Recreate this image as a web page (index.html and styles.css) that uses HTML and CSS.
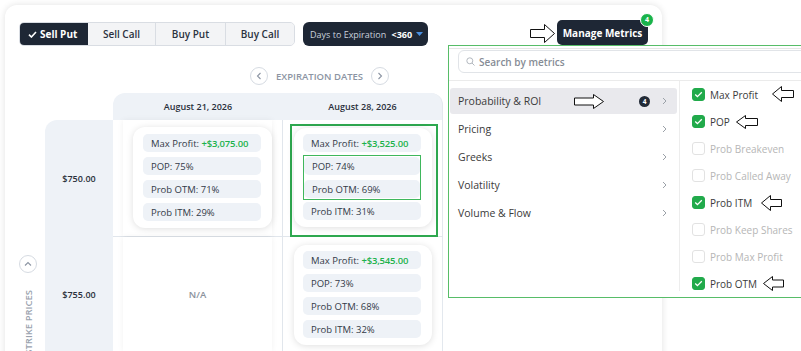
FILE: index.html
```html
<!DOCTYPE html>
<html>
<head>
<meta charset="utf-8">
<link rel="stylesheet" href="styles.css">
</head>
<body>
<div class="page">
  <section class="card">
    <header class="toolbar">
      <div class="seg">
        <button class="seg-btn active w68"><svg class="chk" width="9" height="7" viewBox="0 0 9 7"><path d="M1 3.6 L3.4 6 L8 1" fill="none" stroke="#fff" stroke-width="1.6"/></svg>Sell Put</button>
        <button class="seg-btn w68">Sell Call</button>
        <button class="seg-btn w70">Buy Put</button>
        <button class="seg-btn w68 last">Buy Call</button>
      </div>
      <button class="dte">Days to Expiration <b>&lt;360</b><svg class="caret" width="7" height="4" viewBox="0 0 7 4"><path d="M0 0 H7 L3.5 4 Z" fill="#4a90e2"/></svg></button>
      <div class="spacer"></div>
      <svg class="ann-right-big" width="25" height="19" viewBox="0 0 25 19"><polygon points="0.5,5.5 14.5,5.5 14.5,0.5 24.5,9.5 14.5,18.5 14.5,13.5 0.5,13.5" fill="#fff" stroke="#111" stroke-width="1"/></svg>
      <button class="manage">Manage Metrics<span class="badge">4</span></button>
    </header>

    <div class="exp-nav">
      <span class="circ"><svg width="6" height="8" viewBox="0 0 6 8"><path d="M4.5 1 L1.5 4 L4.5 7" fill="none" stroke="#8c95a3" stroke-width="1.1"/></svg></span>
      <span class="exp-label">EXPIRATION DATES</span>
      <span class="circ"><svg width="6" height="8" viewBox="0 0 6 8"><path d="M1.5 1 L4.5 4 L1.5 7" fill="none" stroke="#8c95a3" stroke-width="1.1"/></svg></span>
    </div>

    <div class="grid-area">
      <div class="axis">
        <span class="circ"><svg width="8" height="6" viewBox="0 0 8 6"><path d="M1 4.5 L4 1.5 L7 4.5" fill="none" stroke="#8c95a3" stroke-width="1.1"/></svg></span>
        <span class="axis-label">STRIKE PRICES</span>
      </div>
      <div class="table">
        <div class="corner"></div>
        <div class="th th-first">August 21, 2026</div>
        <div class="th th-last">August 28, 2026</div>

        <div class="strike strike-first">$750.00</div>
        <div class="cell c1 r1">
          <div class="wrap">
            <div class="mcard mcard-a">
              <div class="pill">Max Profit:&nbsp;<span class="pos">+$3,075.00</span></div>
              <div class="pill">POP: 75%</div>
              <div class="pill">Prob OTM: 71%</div>
              <div class="pill">Prob ITM: 29%</div>
            </div>
          </div>
        </div>
        <div class="cell c2 r1">
          <div class="hl">
            <div class="mcard mcard-b">
              <div class="pill">Max Profit:&nbsp;<span class="pos">+$3,525.00</span></div>
              <div class="hl-inner">
                <div class="pill">POP: 74%</div>
                <div class="pill">Prob OTM: 69%</div>
              </div>
              <div class="pill pill-after">Prob ITM: 31%</div>
            </div>
          </div>
        </div>

        <div class="strike">$755.00</div>
        <div class="cell c1">
          <div class="wrap na">N/A</div>
        </div>
        <div class="cell c2 r2">
          <div class="mcard mcard-b">
            <div class="pill">Max Profit:&nbsp;<span class="pos">+$3,545.00</span></div>
            <div class="pill">POP: 73%</div>
            <div class="pill">Prob OTM: 68%</div>
            <div class="pill">Prob ITM: 32%</div>
          </div>
        </div>
      </div>
    </div>
  </section>

  <div class="panel">
    <div class="panel-head">
      <div class="search">
        <svg width="9" height="9" viewBox="0 0 9 9"><circle cx="3.8" cy="3.8" r="3" fill="none" stroke="#b3b8bf" stroke-width="1"/><path d="M6 6 L8.5 8.5" stroke="#b3b8bf" stroke-width="1"/></svg>
        <span class="ph">Search by metrics</span>
      </div>
    </div>
    <div class="panel-body">
      <ul class="menu">
        <li class="mi sel">Probability &amp; ROI
          <svg class="ann-right" width="30" height="15" viewBox="0 0 30 15"><polygon points="0.5,4 19.5,4 19.5,0.5 29.5,7.5 19.5,14.5 19.5,11 0.5,11" fill="#fff" stroke="#111" stroke-width="1"/></svg>
          <span class="mbadge">4</span>
          <svg class="chev" width="5" height="8" viewBox="0 0 5 8"><path d="M1 1 L4 4 L1 7" fill="none" stroke="#9ba1a8" stroke-width="1"/></svg>
        </li>
        <li class="mi">Pricing<svg class="chev" width="5" height="8" viewBox="0 0 5 8"><path d="M1 1 L4 4 L1 7" fill="none" stroke="#9ba1a8" stroke-width="1"/></svg></li>
        <li class="mi">Greeks<svg class="chev" width="5" height="8" viewBox="0 0 5 8"><path d="M1 1 L4 4 L1 7" fill="none" stroke="#9ba1a8" stroke-width="1"/></svg></li>
        <li class="mi">Volatility<svg class="chev" width="5" height="8" viewBox="0 0 5 8"><path d="M1 1 L4 4 L1 7" fill="none" stroke="#9ba1a8" stroke-width="1"/></svg></li>
        <li class="mi">Volume &amp; Flow<svg class="chev" width="5" height="8" viewBox="0 0 5 8"><path d="M1 1 L4 4 L1 7" fill="none" stroke="#9ba1a8" stroke-width="1"/></svg></li>
      </ul>
      <ul class="opts">
        <li class="opt on"><span class="cb"><svg width="9" height="7" viewBox="0 0 9 7"><path d="M1.2 3.6 L3.4 5.6 L7.8 1.2" fill="none" stroke="#fff" stroke-width="1.3"/></svg></span>Max Profit<svg class="ann-left a1" width="22" height="16" viewBox="0 0 22 16"><polygon points="21.5,4.5 9.5,4.5 9.5,0.5 0.5,8 9.5,15.5 9.5,11.5 21.5,11.5" fill="#fff" stroke="#111" stroke-width="1"/></svg></li>
        <li class="opt on"><span class="cb"><svg width="9" height="7" viewBox="0 0 9 7"><path d="M1.2 3.6 L3.4 5.6 L7.8 1.2" fill="none" stroke="#fff" stroke-width="1.3"/></svg></span>POP<svg class="ann-left a2" width="22" height="14" viewBox="0 0 22 14"><polygon points="21.5,3.5 9.5,3.5 9.5,0.5 0.5,7 9.5,13.5 9.5,10.5 21.5,10.5" fill="#fff" stroke="#111" stroke-width="1"/></svg></li>
        <li class="opt"><span class="cb"></span>Prob Breakeven</li>
        <li class="opt"><span class="cb"></span>Prob Called Away</li>
        <li class="opt on"><span class="cb"><svg width="9" height="7" viewBox="0 0 9 7"><path d="M1.2 3.6 L3.4 5.6 L7.8 1.2" fill="none" stroke="#fff" stroke-width="1.3"/></svg></span>Prob ITM<svg class="ann-left a3" width="21" height="16" viewBox="0 0 21 16"><polygon points="20.5,4.5 9.5,4.5 9.5,0.5 0.5,8 9.5,15.5 9.5,11.5 20.5,11.5" fill="#fff" stroke="#111" stroke-width="1"/></svg></li>
        <li class="opt"><span class="cb"></span>Prob Keep Shares</li>
        <li class="opt"><span class="cb"></span>Prob Max Profit</li>
        <li class="opt on"><span class="cb"><svg width="9" height="7" viewBox="0 0 9 7"><path d="M1.2 3.6 L3.4 5.6 L7.8 1.2" fill="none" stroke="#fff" stroke-width="1.3"/></svg></span>Prob OTM<svg class="ann-left a4" width="21" height="15" viewBox="0 0 21 15"><polygon points="20.5,4 9.5,4 9.5,0.5 0.5,7.5 9.5,14.5 9.5,11 20.5,11" fill="#fff" stroke="#111" stroke-width="1"/></svg></li>
      </ul>
    </div>
  </div>
</div>
</body>
</html>
```

FILE: styles.css
```css
* { box-sizing: border-box; }
html, body {
  margin: 0;
  padding: 0;
  background: #fff;
  width: 801px;
  height: 351px;
  overflow: hidden;
  font-family: "Open Sans", "Liberation Sans", sans-serif;
  color: #2f3440;
}
ul { list-style: none; margin: 0; padding: 0; }
button { font-family: inherit; border: 0; margin: 0; padding: 0; cursor: pointer; }

.page {
  position: relative;
  width: 801px;
  height: 351px;
  padding: 5px 0 0 5px;
  overflow: hidden;
}

.card {
  width: 657px;
  height: 420px;
  background: #fff;
  border-radius: 12px;
  box-shadow: 0 0 7px rgba(0, 0, 0, 0.12);
  padding: 15px 14px 0 14px;
}

/* toolbar */
.toolbar { display: flex; align-items: flex-start; height: 26px; }
.seg {
  display: flex;
  margin-top: 2px;
  height: 24px;
  border: 1px solid #d9dde3;
  border-radius: 5px;
  overflow: hidden;
  background: #f3f4f6;
}
.seg-btn {
  height: 22px;
  background: #f3f4f6;
  color: #2b3240;
  font-size: 10px;
  font-weight: 600;
  border-right: 1px solid #d9dde3;
  display: flex;
  align-items: center;
  justify-content: center;
}
.seg-btn.last { border-right: 0; }
.w68 { width: 68px; }
.w70 { width: 70px; }
.seg-btn.active {
  background: #1e2735;
  color: #fff;
  font-weight: 700;
  border-right: 0;
  justify-content: flex-start;
  padding-left: 8px;
}
.chk { margin-right: 3px; }

.dte {
  margin: 2px 0 0 8px;
  height: 24px;
  width: 125px;
  background: #1e2735;
  border-radius: 6px;
  color: #c9d1dc;
  font-size: 9px;
  font-weight: 500;
  display: flex;
  align-items: center;
  padding-left: 7px;
  white-space: pre;
}
.dte b { color: #fff; font-weight: 700; margin-left: 3px; }
.caret { margin-left: 4px; }

.spacer { flex: 1; }
.ann-right-big { margin: 4px 2px 0 0; }
.manage {
  position: relative;
  width: 91px;
  height: 25px;
  background: #1e2735;
  border-radius: 5px;
  color: #fff;
  font-size: 10px;
  font-weight: 700;
}
.badge {
  position: absolute;
  top: -7px;
  right: -6px;
  width: 14px;
  height: 14px;
  border-radius: 50%;
  background: #19b34a;
  border: 1.5px solid #fff;
  color: #fff;
  font-size: 7px;
  font-weight: 700;
  line-height: 11px;
  text-align: center;
}

/* expiration nav */
.exp-nav {
  display: flex;
  align-items: center;
  margin: 21px 0 0 231px;
  height: 18px;
}
.circ {
  width: 18px;
  height: 18px;
  border: 1px solid #d6dbe2;
  border-radius: 50%;
  display: flex;
  align-items: center;
  justify-content: center;
  background: #fff;
}
.exp-label {
  margin: 0 8px;
  font-size: 9.5px;
  font-weight: 600;
  color: #8c95a3;
}

/* grid area */
.grid-area { display: flex; margin-top: 8px; }
.axis {
  width: 18px;
  margin-right: 8px;
  padding-top: 162px;
  display: flex;
  flex-direction: column;
  align-items: center;
}
.axis-label {
  margin-top: 17px;
  writing-mode: vertical-rl;
  transform: rotate(180deg);
  font-size: 9.5px;
  font-weight: 600;
  color: #9aa2ae;
  white-space: nowrap;
}

.table {
  display: grid;
  grid-template-columns: 68px 170px 160px;
  grid-template-rows: 27px 117px 114px;
}
.corner { background: #fff; }
.th {
  background: #eef2f7;
  font-size: 9px;
  font-weight: 600;
  color: #2a303b;
  display: flex;
  align-items: center;
  justify-content: center;
}
.th-first { border-top-left-radius: 12px; }
.th-last { border-top-right-radius: 12px; border-right: 1px solid #e3e8ee; }

.strike {
  background: #eef2f7;
  font-size: 9px;
  font-weight: 600;
  color: #2a303b;
  display: flex;
  align-items: center;
  justify-content: center;
}
.strike-first { border-top-left-radius: 12px; }

.cell { position: relative; background: #fff; }
.c1 { border-right: 1px solid #e1e6ec; padding: 0 10px 0 10px; }
.c2 { border-right: 1px solid #e3e8ee; }
.r1 { border-bottom: 1px solid #e1e6ec; }

.wrap {
  height: 100%;
  width: 149px;
  background: #fff;
  box-shadow: 0 0 6px rgba(0, 0, 0, 0.06);
  padding-top: 7px;
}
.wrap.na {
  padding-top: 0;
  display: flex;
  align-items: center;
  justify-content: center;
  font-size: 9.5px;
  font-weight: 600;
  color: #8b929c;
}

.mcard {
  background: #fff;
  border-radius: 12px;
  box-shadow: 0 1px 7px rgba(0, 0, 0, 0.13);
  font-size: 9.5px;
  color: #333a47;
}
.mcard-a { margin-left: 10px; width: 139px; padding: 7px 11px 7px 10px; }
.mcard-b { width: 138px; padding: 6px 11px 7px 9px; }
.r2 { padding: 8px 0 0 11px; }

.pill {
  height: 18px;
  background: #eef2f7;
  border-radius: 5px;
  padding-left: 8px;
  display: flex;
  align-items: center;
  margin-top: 5px;
  white-space: nowrap;
}
.pill:first-child { margin-top: 0; }
.pos { color: #1db24c; font-weight: 600; letter-spacing: -0.2px; }

.hl {
  margin: 4px 0 0 7px;
  width: 148px;
  height: 113px;
  border: 2px solid #2ea84f;
  padding: 2px 0 0 2px;
}
.hl-inner {
  margin-top: 3px;
  border: 1px solid #3fb75c;
  padding: 1px 0;
}
.hl-inner .pill:first-child { margin-top: 0; }
.pill-after { margin-top: 2px; }

/* dropdown panel */
.panel {
  position: absolute;
  left: 448px;
  top: 45px;
  width: 370px;
  height: 253px;
  background: #fff;
  border: 1px solid #57bd68;
  box-shadow: inset 0 2px 0 #fff, inset 0 3px 0 #e6e6e6;
}
.panel-head {
  padding: 4px 0 7px 9px;
  border-bottom: 1px solid #ebebeb;
}
.search {
  height: 23px;
  border: 1px solid #e1e4e8;
  border-radius: 6px;
  display: flex;
  align-items: center;
  padding-left: 7px;
}
.ph {
  margin-left: 4px;
  font-size: 10px;
  font-weight: 600;
  color: #868c95;
}

.panel-body { display: flex; height: 210px; overflow: hidden; }
.menu {
  width: 231px;
  padding: 7px 2px 0 1px;
  border-right: 1px solid #ededed;
}
.mi {
  height: 26px;
  margin-bottom: 2px;
  border-radius: 3px;
  padding: 0 10px 0 8px;
  display: flex;
  align-items: center;
  font-size: 10.5px;
  color: #3b3b3b;
}
.mi.sel { background: #e9e9ed; }
.mi .chev { margin-left: auto; }
.ann-right { margin-left: 33px; }
.mbadge {
  margin-left: auto;
  width: 11px;
  height: 11px;
  border-radius: 50%;
  background: #222a36;
  color: #fff;
  font-size: 6.5px;
  font-weight: 700;
  line-height: 11px;
  text-align: center;
}
.mi.sel .chev { margin-left: 12px; }

.opts { padding-left: 12px; }
.opt {
  height: 27px;
  display: flex;
  align-items: center;
  font-size: 10px;
  color: #b6b6b6;
  white-space: nowrap;
}
.opt.on { color: #3b3b3b; }
.cb {
  width: 13px;
  height: 13px;
  border-radius: 3px;
  border: 1px solid #e2e2e2;
  background: #fff;
  margin-right: 5px;
  display: flex;
  align-items: center;
  justify-content: center;
  flex: none;
}
.opt.on .cb { background: #21aa4b; border-color: #21aa4b; }
.a1 { margin-left: 14px; margin-top: -1px; }
.a2 { margin-left: 6px; }
.a3 { margin-left: 9px; }
.a4 { margin-left: 6px; }
```
